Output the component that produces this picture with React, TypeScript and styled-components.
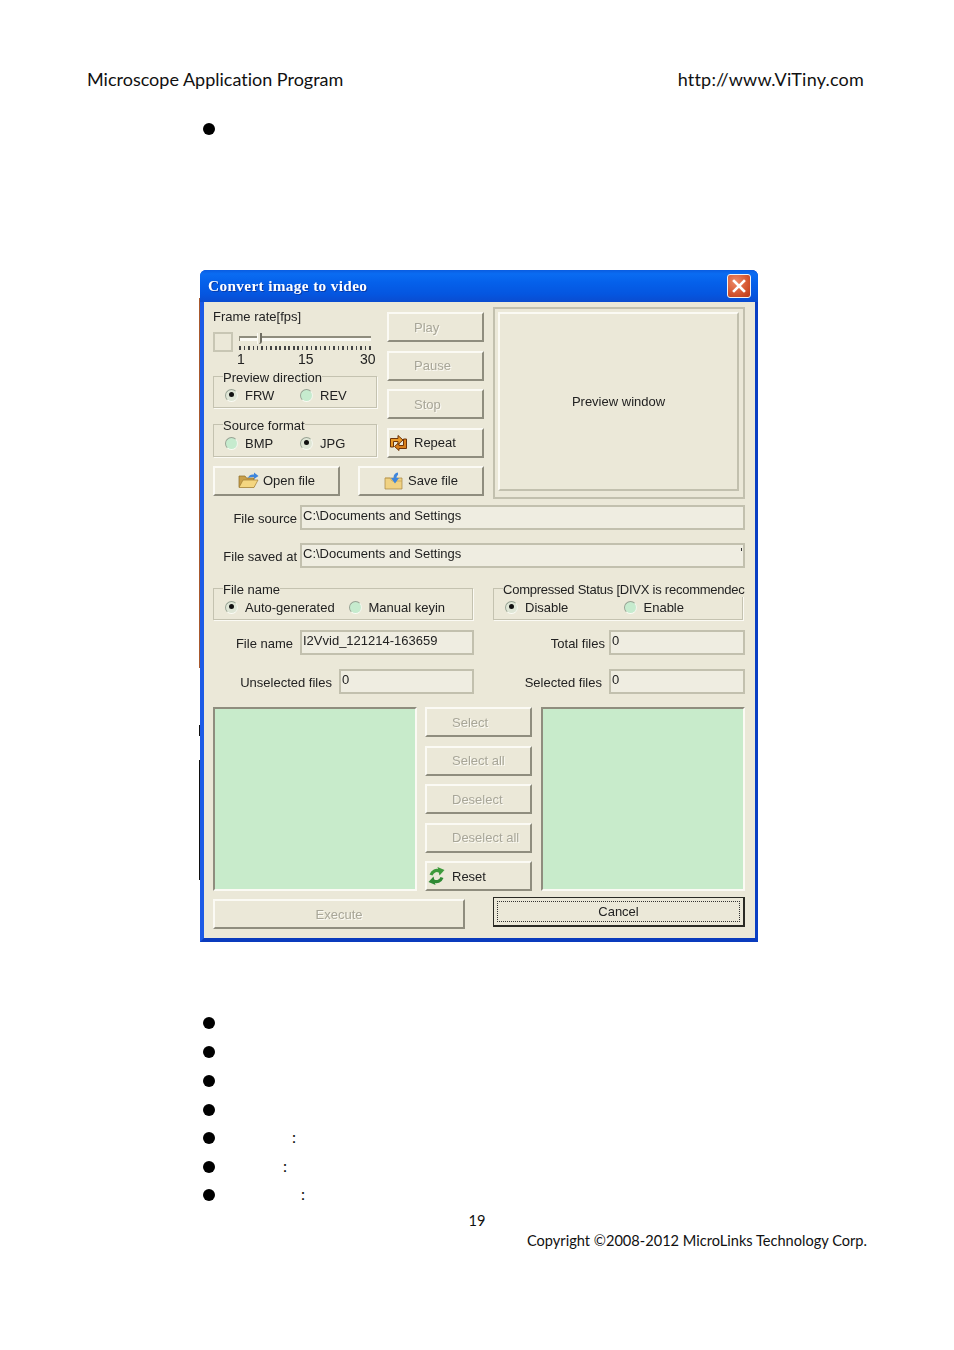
import React from "react";
import styled, { createGlobalStyle, css } from "styled-components";

const GlobalStyle = createGlobalStyle`
  * { box-sizing: border-box; }
  html, body { margin: 0; padding: 0; background: #fff; }
`;

/* page */

const Page = styled.main`
  width: 954px;
  height: 1350px;
  overflow: hidden;
  background: #fff;
  color: #111;
  font-family: "Lato", "Liberation Sans", sans-serif;
  font-size: 18px;
  font-variant-ligatures: none;
`;

const PageHeader = styled.header`
  display: flex;
  justify-content: space-between;
  align-items: center;
  height: 20px;
  margin-top: 69px;
  padding: 0 90px 0 87px;
`;

const HeaderLink = styled.span`
  letter-spacing: 0.2px;
`;

const BulletRow = styled.div<{ $top?: number }>`
  display: flex;
  align-items: center;
  height: 12px;
  margin-top: ${(p) => p.$top ?? 0}px;
  padding-left: 203px;
`;

const Dot = styled.span`
  width: 12px;
  height: 12px;
  border-radius: 50%;
  background: #000;
`;

const Colon = styled.span<{ $at: number }>`
  margin-left: ${(p) => p.$at}px;
  margin-top: -2px;
  font-size: 16px;
  line-height: 12px;
`;

const TopBullet = styled.div`
  margin-top: 34px;
`;

const BulletList = styled.div`
  display: flex;
  flex-direction: column;
  margin-top: 75px;
`;

const PageNumber = styled.div`
  margin-top: 10px;
  height: 20px;
  line-height: 20px;
  text-align: center;
  font-size: 14.6px;
`;

const Copyright = styled.div`
  height: 19px;
  line-height: 19px;
  padding-right: 87px;
  text-align: right;
  font-size: 14.6px;
`;

/* dialog shell */

const Dialog = styled.section`
  position: relative;
  width: 558px;
  height: 672px;
  margin: 135px 0 0 200px;
  display: flex;
  flex-direction: column;
  background: #0a4fdc;
  border-radius: 6px 6px 0 0;
  border-left: 4px solid #1c5ae6;
  border-right: 3px solid #0a3fc4;
  border-bottom: 4px solid #0a3bbd;
  font-family: "Liberation Sans", Arial, sans-serif;
  font-size: 13px;
  color: #222;
  filter: blur(0.35px);
`;

const EdgeStrip = styled.span<{ $top: number; $height: number; $color: string }>`
  position: absolute;
  left: -5px;
  top: ${(p) => p.$top}px;
  width: 1px;
  height: ${(p) => p.$height}px;
  background: ${(p) => p.$color};
`;

const TitleBar = styled.div`
  height: 32px;
  margin-left: -4px;
  margin-right: -3px;
  padding: 0 7px 0 8px;
  display: flex;
  align-items: center;
  justify-content: space-between;
  border-radius: 6px 6px 0 0;
  background: linear-gradient(180deg, #0a5ce0 0%, #0a6cf2 12%, #0560ea 40%, #0556e0 75%, #0a4cd0 100%);
`;

const Title = styled.span`
  font-family: "Liberation Serif", serif;
  font-weight: 700;
  font-size: 15.3px;
  letter-spacing: 0.35px;
  color: #fff;
  text-shadow: 1px 1px 0 #0a3aa8;
`;

const CloseButton = styled.span`
  width: 24px;
  height: 24px;
  display: flex;
  align-items: center;
  justify-content: center;
  border: 1px solid #f2f2f2;
  border-radius: 3px;
  background: radial-gradient(circle at 35% 30%, #ee8a68, #d4552f 60%, #b8381a);
`;

const Body = styled.div`
  flex: 1;
  padding: 5px 10px 0 9px;
  background: #ebe8d8;
`;

/* controls */

const Raised = css`
  border-style: solid;
  border-width: 2px;
  border-color: #fbfaf4 #8f8d7e #8f8d7e #fbfaf4;
  background: #ebe8d8;
`;

const Button = styled.div<{ $disabled?: boolean; $center?: boolean; $w?: number; $h?: number }>`
  ${Raised}
  width: ${(p) => (p.$w ? `${p.$w}px` : "100%")};
  height: ${(p) => p.$h ?? 30}px;
  display: flex;
  align-items: center;
  justify-content: ${(p) => (p.$center ? "center" : "flex-start")};
  color: ${(p) => (p.$disabled ? "#a8a698" : "#222")};
  text-shadow: ${(p) => (p.$disabled ? "1px 1px 0 #fbfaf4" : "none")};
`;

const IconSlot = styled.span<{ $w?: number }>`
  display: flex;
  align-items: center;
  justify-content: flex-start;
  width: ${(p) => p.$w ?? 25}px;
`;

const DefaultButton = styled.div`
  position: relative;
  width: 252px;
  height: 30px;
  display: flex;
  align-items: center;
  justify-content: center;
  border: 2px solid #2a2a24;
  border-top-width: 1px;
  border-left-width: 1px;
  background: #ebe8d8;

  &::after {
    content: "";
    position: absolute;
    inset: 3px;
    border: 1px dotted #333;
  }
`;

const Group = styled.div<{ $w: number; $h?: number }>`
  position: relative;
  width: ${(p) => p.$w}px;
  height: ${(p) => p.$h ?? 32}px;
  padding: 9px 0 0 11px;
  display: flex;
  border: 1px solid #c4c2b0;
  box-shadow: 1px 1px 0 #fbfaf4;
`;

const Legend = styled.span<{ $tight?: boolean }>`
  position: absolute;
  left: 9px;
  top: -6px;
  height: 14px;
  line-height: 14px;
  background: #ebe8d8;
  white-space: nowrap;
  letter-spacing: ${(p) => (p.$tight ? "-0.24px" : "0")};
`;

const RadioItem = styled.label<{ $w: number }>`
  width: ${(p) => p.$w}px;
  display: flex;
  align-items: center;
  gap: 7px;
  height: 18px;
`;

const RadioMark = styled.span<{ $on?: boolean }>`
  position: relative;
  width: 13px;
  height: 13px;
  border-radius: 50%;
  border: 1.5px solid #98a394;
  border-right-color: #f4f6ee;
  border-bottom-color: #fbfcf6;
  background: ${(p) => (p.$on ? "#dfe6d6" : "#c6ebce")};

  ${(p) =>
    p.$on &&
    css`
      &::after {
        content: "";
        position: absolute;
        left: 2.5px;
        top: 2.5px;
        width: 5px;
        height: 5px;
        border-radius: 50%;
        background: #111;
      }
    `}
`;

const Field = styled.div<{ $w: number; $h?: number; $mark?: boolean }>`
  position: relative;
  width: ${(p) => p.$w}px;
  height: ${(p) => p.$h ?? 25}px;
  padding: 0 0 0 1px;
  line-height: 17px;
  border: 2px solid #c2c0ae;
  background: #efede1;
  white-space: nowrap;

  ${(p) =>
    p.$mark &&
    css`
      &::after {
        content: "";
        position: absolute;
        right: 1px;
        top: 3px;
        width: 1.5px;
        height: 3px;
        background: #333;
      }
    `}
`;

const ListBox = styled.div`
  width: 204px;
  height: 184px;
  background: #c8ebcb;
  border-style: solid;
  border-width: 2px;
  border-color: #8f8d7e #fbfaf4 #fbfaf4 #8f8d7e;
`;

/* top area */

const TopArea = styled.div`
  display: flex;
  gap: 9px;
`;

const TopLeft = styled.div`
  width: 271px;
  display: flex;
  flex-direction: column;
  gap: 8px;
`;

const TopColumns = styled.div`
  display: flex;
  gap: 10px;
`;

const SettingsColumn = styled.div`
  width: 164px;
  display: flex;
  flex-direction: column;
`;

const FrameLabel = styled.div`
  height: 20px;
  line-height: 20px;
`;

const SliderRow = styled.div`
  display: flex;
  gap: 6px;
  height: 20px;
  margin-top: 5px;
`;

const CheckBox = styled.span`
  width: 20px;
  height: 20px;
  border: 2px solid #c8c6b4;
`;

const Slider = styled.div`
  position: relative;
  width: 132px;
`;

const SliderTrack = styled.div`
  height: 5px;
  margin-top: 4px;
  background: #fbfaf4;
  border-top: 2px solid #8f8d7e;
  border-left: 1px solid #8f8d7e;
`;

const SliderThumb = styled.span`
  position: absolute;
  left: 18px;
  top: 1px;
  width: 5px;
  height: 11px;
  background: #ebe8d8;
  border-right: 2px solid #6f6d62;
  border-left: 1px solid #fbfaf4;
  border-radius: 0 0 3px 0;
`;

const SliderTicks = styled.div`
  height: 4px;
  margin-top: 5px;
  background: repeating-linear-gradient(90deg, #444 0 1.5px, transparent 1.5px 4.5px);
`;

const SliderScale = styled.div`
  display: flex;
  height: 14px;
  margin-left: 24px;
  font-size: 14px;
  line-height: 14px;
`;

const ScaleMark = styled.span<{ $w: number }>`
  width: ${(p) => p.$w}px;
`;

const GroupSlot = styled.div<{ $top: number }>`
  margin-top: ${(p) => p.$top}px;
`;

const PlayColumn = styled.div`
  width: 97px;
  padding-top: 5px;
  display: flex;
  flex-direction: column;
  gap: 8.67px;
`;

const FileButtons = styled.div`
  display: flex;
  justify-content: space-between;
`;

const PreviewOuter = styled.div`
  width: 252px;
  height: 192px;
  padding: 3px 4px 6px 3px;
  border: 2px solid #c2c0ae;
`;

const PreviewInner = styled.div`
  height: 100%;
  display: flex;
  align-items: center;
  justify-content: center;
  border-style: solid;
  border-width: 2px;
  border-color: #fbfaf4 #c2c0ae #c2c0ae #fbfaf4;
`;

/* form rows */

const PathRow = styled.div<{ $top: number }>`
  display: flex;
  justify-content: flex-end;
  align-items: center;
  gap: 3px;
  margin-top: ${(p) => p.$top}px;
`;

const FieldLabel = styled.span`
  padding-top: 2px;
  white-space: nowrap;
`;

const GroupRow = styled.div`
  display: flex;
  gap: 20px;
  margin-top: 20px;
`;

const CountRow = styled.div<{ $top: number }>`
  display: flex;
  margin-top: ${(p) => p.$top}px;
`;

const CountCell = styled.div<{ $w: number; $gap: number }>`
  width: ${(p) => p.$w}px;
  display: flex;
  justify-content: flex-end;
  align-items: center;
  gap: ${(p) => p.$gap}px;
`;

/* lists */

const ListArea = styled.div`
  display: flex;
  gap: 8px;
  margin-top: 13px;
`;

const ListButtons = styled.div`
  width: 107px;
  display: flex;
  flex-direction: column;
  gap: 8.5px;
  margin-right: 1px;
`;

const BottomRow = styled.div`
  display: flex;
  justify-content: space-between;
  align-items: flex-start;
  margin-top: 6px;
`;

const ExecuteSlot = styled.div`
  margin-top: 2px;
`;

/* icons */

const OpenIcon = () => (
  <svg width="21" height="17" viewBox="0 0 21 17">
    <path d="M1 4h6l1.500 2H16v9H1z" fill="#c9a04a" stroke="#8a6a26" strokeWidth="0.7" />
    <path d="M1 15.500 5 8h15l-4 7.500z" fill="#f4d680" stroke="#a07c30" strokeWidth="0.7" />
    <path d="M10 6c1-3 3.500-4 6-3.500V0.500L20.500 4 16 7V5c-2 -.3-4 .2-6 1z" fill="#3f86dc" />
  </svg>
);

const SaveIcon = () => (
  <svg width="19" height="18" viewBox="0 0 19 18">
    <path d="M1 6h17v11H1z" fill="#f0d283" stroke="#a58542" strokeWidth="0.7" />
    <path d="M1 6h5l2 3h10" fill="none" stroke="#c9a659" strokeWidth="0.8" />
    <path d="M14 0.500C11 1 9.500 2.500 9.500 6H7l4 5.500L15 6h-2.500c0-1.500.5-2.500 1.500-3z" fill="#3f86dc" />
  </svg>
);

const RepeatIcon = () => (
  <svg width="19" height="17" viewBox="0 0 19 17">
    <path d="M17.500 5v9.500H10v2l-4.500-4 4.500-4v3h4.500V5z" fill="#d9801c" stroke="#6e340a" strokeWidth="1" />
    <path d="M1.500 13V4.500H9V1.500L14 6l-5 4.500v-3H4.500V13z" fill="#eb9a28" stroke="#6e340a" strokeWidth="1" />
  </svg>
);

const ResetIcon = () => (
  <svg width="19" height="18" viewBox="0 0 19 18">
    <path d="M4 8C5.500 4 9 2.500 12.500 4" fill="none" stroke="#3e9a3c" strokeWidth="3.200" />
    <path d="M10.500 0 17.500 3 12.500 8.500z" fill="#3e9a3c" />
    <path d="M15 10.500C13.500 14.500 10 15.500 6.500 14" fill="none" stroke="#2f8a34" strokeWidth="3.200" />
    <path d="M8.500 18 1.500 15 6.500 9.500z" fill="#2f8a34" />
  </svg>
);

const STACK_BUTTONS = ["Play", "Pause", "Stop"];
const LIST_BUTTONS = ["Select", "Select all", "Deselect", "Deselect all"];
const LOWER_BULLETS: { top: number; colon?: number }[] = [
  { top: 0 },
  { top: 17 },
  { top: 17 },
  { top: 17 },
  { top: 16, colon: 77 },
  { top: 17, colon: 68 },
  { top: 16, colon: 86 },
];

const App: React.FC = () => {
  return (
    <Page>
      <GlobalStyle />
      <PageHeader>
        <span>Microscope Application Program</span>
        <HeaderLink>http://www.ViTiny.com</HeaderLink>
      </PageHeader>

      <TopBullet>
        <BulletRow>
          <Dot />
        </BulletRow>
      </TopBullet>

      <Dialog>
        <EdgeStrip $top={28} $height={370} $color="#a85a30" />
        <EdgeStrip $top={455} $height={11} $color="#111" />
        <EdgeStrip $top={490} $height={120} $color="#111" />

        <TitleBar>
          <Title>Convert image to video</Title>
          <CloseButton>
            <svg width="14" height="14" viewBox="0 0 14 14">
              <path d="M2 2l10 10M12 2 2 12" stroke="#fff" strokeWidth="2.6" strokeLinecap="square" />
            </svg>
          </CloseButton>
        </TitleBar>

        <Body>
          <TopArea>
            <TopLeft>
              <TopColumns>
                <SettingsColumn>
                  <FrameLabel>Frame rate[fps]</FrameLabel>
                  <SliderRow>
                    <CheckBox />
                    <Slider>
                      <SliderTrack />
                      <SliderThumb />
                      <SliderTicks />
                    </Slider>
                  </SliderRow>
                  <SliderScale>
                    <ScaleMark $w={61}>1</ScaleMark>
                    <ScaleMark $w={62}>15</ScaleMark>
                    <ScaleMark $w={16}>30</ScaleMark>
                  </SliderScale>

                  <GroupSlot $top={10}>
                    <Group $w={164}>
                      <Legend>Preview direction</Legend>
                      <RadioItem $w={75}>
                        <RadioMark $on />
                        FRW
                      </RadioItem>
                      <RadioItem $w={75}>
                        <RadioMark />
                        REV
                      </RadioItem>
                    </Group>
                  </GroupSlot>

                  <GroupSlot $top={16}>
                    <Group $w={164} $h={33}>
                      <Legend>Source format</Legend>
                      <RadioItem $w={75}>
                        <RadioMark />
                        BMP
                      </RadioItem>
                      <RadioItem $w={75}>
                        <RadioMark $on />
                        JPG
                      </RadioItem>
                    </Group>
                  </GroupSlot>
                </SettingsColumn>

                <PlayColumn>
                  {STACK_BUTTONS.map((label) => (
                    <Button key={label} $disabled>
                      <IconSlot />
                      {label}
                    </Button>
                  ))}
                  <Button>
                    <IconSlot>
                      <RepeatIcon />
                    </IconSlot>
                    Repeat
                  </Button>
                </PlayColumn>
              </TopColumns>

              <FileButtons>
                <Button $center $w={127}>
                  <IconSlot $w={25}>
                    <OpenIcon />
                  </IconSlot>
                  Open file
                </Button>
                <Button $center $w={126}>
                  <IconSlot $w={24}>
                    <SaveIcon />
                  </IconSlot>
                  Save file
                </Button>
              </FileButtons>
            </TopLeft>

            <PreviewOuter>
              <PreviewInner>Preview window</PreviewInner>
            </PreviewOuter>
          </TopArea>

          <PathRow $top={6}>
            <FieldLabel>File source</FieldLabel>
            <Field $w={445}>C:\Documents and Settings</Field>
          </PathRow>
          <PathRow $top={13}>
            <FieldLabel>File saved at</FieldLabel>
            <Field $w={445} $mark>
              C:\Documents and Settings
            </Field>
          </PathRow>

          <GroupRow>
            <Group $w={260}>
              <Legend>File name</Legend>
              <RadioItem $w={124}>
                <RadioMark $on />
                Auto-generated
              </RadioItem>
              <RadioItem $w={124}>
                <RadioMark />
                Manual keyin
              </RadioItem>
            </Group>
            <Group $w={250}>
              <Legend $tight>Compressed Status [DIVX is recommendec</Legend>
              <RadioItem $w={119}>
                <RadioMark $on />
                Disable
              </RadioItem>
              <RadioItem $w={119}>
                <RadioMark />
                Enable
              </RadioItem>
            </Group>
          </GroupRow>

          <CountRow $top={10}>
            <CountCell $w={261} $gap={7}>
              <FieldLabel>File name</FieldLabel>
              <Field $w={174}>I2Vvid_121214-163659</Field>
            </CountCell>
            <CountCell $w={271} $gap={4}>
              <FieldLabel>Total files</FieldLabel>
              <Field $w={136}>0</Field>
            </CountCell>
          </CountRow>
          <CountRow $top={14}>
            <CountCell $w={261} $gap={7}>
              <FieldLabel>Unselected files</FieldLabel>
              <Field $w={135}>0</Field>
            </CountCell>
            <CountCell $w={271} $gap={7}>
              <FieldLabel>Selected files</FieldLabel>
              <Field $w={136}>0</Field>
            </CountCell>
          </CountRow>

          <ListArea>
            <ListBox />
            <ListButtons>
              {LIST_BUTTONS.map((label) => (
                <Button key={label} $disabled>
                  <IconSlot />
                  {label}
                </Button>
              ))}
              <Button>
                <IconSlot>
                  <ResetIcon />
                </IconSlot>
                Reset
              </Button>
            </ListButtons>
            <ListBox />
          </ListArea>

          <BottomRow>
            <ExecuteSlot>
              <Button $center $disabled $w={252}>
                Execute
              </Button>
            </ExecuteSlot>
            <DefaultButton>Cancel</DefaultButton>
          </BottomRow>
        </Body>
      </Dialog>

      <BulletList>
        {LOWER_BULLETS.map((row, i) => (
          <BulletRow key={i} $top={row.top}>
            <Dot />
            {row.colon !== undefined && <Colon $at={row.colon}>:</Colon>}
          </BulletRow>
        ))}
      </BulletList>

      <PageNumber>19</PageNumber>
      <Copyright>Copyright ©2008-2012 MicroLinks Technology Corp.</Copyright>
    </Page>
  );
};

export default App;
